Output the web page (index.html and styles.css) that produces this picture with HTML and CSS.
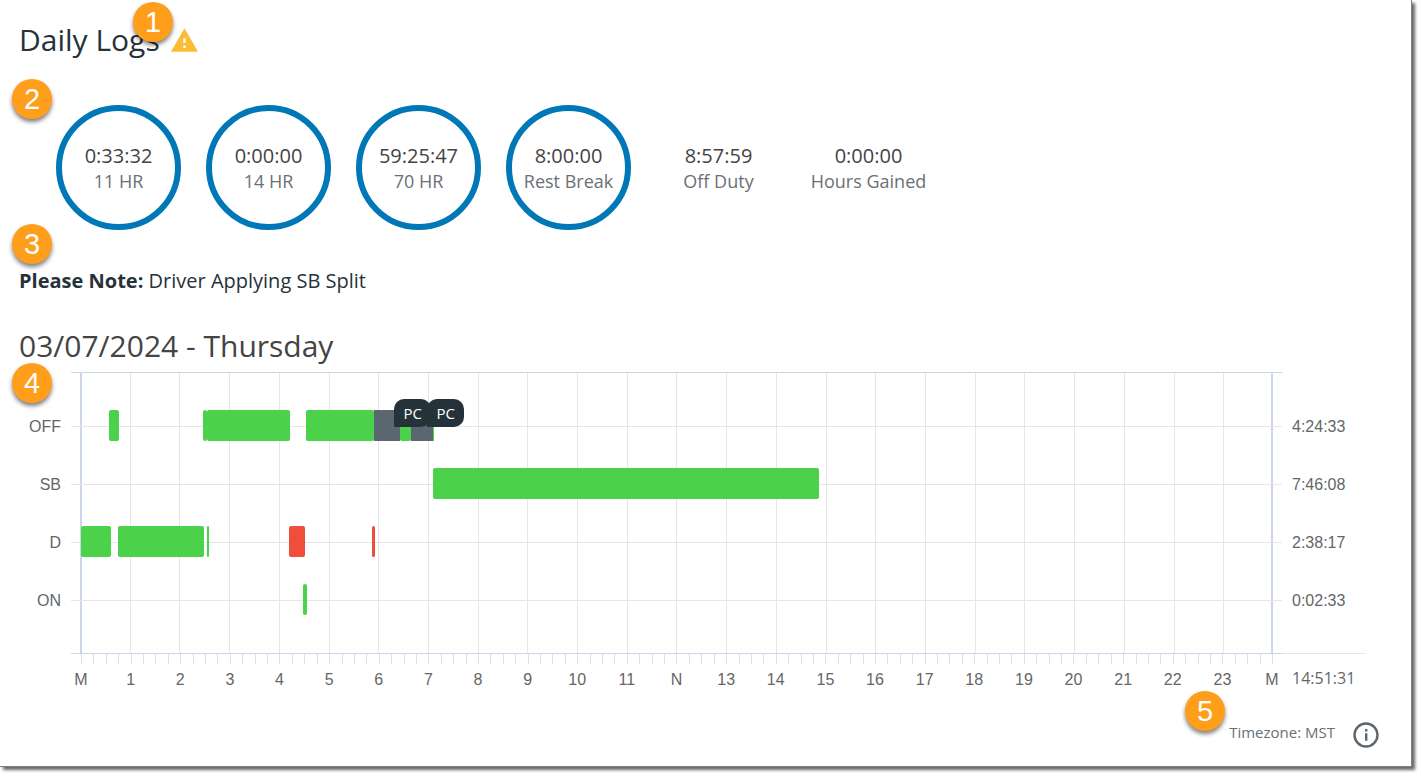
FILE: index.html
```html
<!DOCTYPE html>
<html lang="en">
<head>
  <meta charset="UTF-8" />
  <meta name="viewport" content="width=device-width, initial-scale=1.0" />
  <title>Daily Logs</title>
  <link rel="stylesheet" href="styles.css">
</head>
<body>

  <main class="card">
    <header class="card-header">
      <h1>Daily Logs</h1>
      <svg class="warning-icon" viewBox="1 2 22 19" role="img" aria-label="Warning">
        <path fill="#f9bc33" d="M1 21h22L12 2z" />
        <path fill="#fff" d="M11 10h2v4h-2zM11 16h2v2h-2z" />
      </svg>
      <span class="marker marker-title">1</span>
    </header>

    <section class="gauges">
      <span class="marker marker-gauges">2</span>
      <div class="gauge ring"><span class="time">0:33:32</span><span class="name">11 HR</span></div>
      <div class="gauge ring"><span class="time">0:00:00</span><span class="name">14 HR</span></div>
      <div class="gauge ring"><span class="time">59:25:47</span><span class="name">70 HR</span></div>
      <div class="gauge ring"><span class="time">8:00:00</span><span class="name">Rest Break</span></div>
      <div class="gauge"><span class="time">8:57:59</span><span class="name">Off Duty</span></div>
      <div class="gauge"><span class="time">0:00:00</span><span class="name">Hours Gained</span></div>
    </section>

    <p class="note"><span class="marker marker-note">3</span><strong>Please Note:</strong> Driver Applying SB Split</p>

    <h2>03/07/2024 - Thursday</h2>

    <section class="chart">
      <span class="marker marker-chart">4</span>

      <div class="lane-labels">
        <span>OFF</span>
        <span>SB</span>
        <span>D</span>
        <span>ON</span>
      </div>

      <div class="plot">
        <div class="lanes">
          <!-- OFF -->
          <div class="lane">
            <i class="bar" style="margin-left: 2.35%; width: 0.84%"></i>
            <i class="bar" style="margin-left: 7.05%; width: 0.34%"></i>
            <i class="bar" style="width: 6.97%"></i>
            <i class="bar" style="margin-left: 1.32%; width: 5.71%"></i>
            <i class="bar pc" style="width: 2.22%"><b class="flag">PC</b></i>
            <i class="bar" style="width: 0.92%"></i>
            <i class="bar pc" style="width: 1.85%"><b class="flag">PC</b></i>
            <i class="bar" style="width: 0.08%"></i>
          </div>
          <!-- SB -->
          <div class="lane">
            <i class="bar" style="margin-left: 29.53%; width: 32.43%"></i>
          </div>
          <!-- D -->
          <div class="lane">
            <i class="bar" style="width: 2.52%"></i>
            <i class="bar" style="margin-left: 0.55%; width: 7.26%"></i>
            <i class="bar" style="margin-left: 0.21%; width: 0.21%"></i>
            <i class="bar violation" style="margin-left: 6.68%; width: 1.39%"></i>
            <i class="bar violation" style="margin-left: 5.63%; width: 0.21%"></i>
          </div>
          <!-- ON -->
          <div class="lane">
            <i class="bar" style="margin-left: 18.68%; width: 0.29%"></i>
          </div>
        </div>
      </div>

      <div class="lane-totals">
        <span>4:24:33</span>
        <span>7:46:08</span>
        <span>2:38:17</span>
        <span>0:02:33</span>
      </div>

      <div class="axis">
        <div class="ticks"></div>
        <div class="hours">
          <span>M</span><span>1</span><span>2</span><span>3</span><span>4</span><span>5</span>
          <span>6</span><span>7</span><span>8</span><span>9</span><span>10</span><span>11</span>
          <span>N</span><span>13</span><span>14</span><span>15</span><span>16</span><span>17</span>
          <span>18</span><span>19</span><span>20</span><span>21</span><span>22</span><span>23</span>
          <span>M</span>
        </div>
      </div>
      <div class="grand-total">14:51:31</div>
    </section>

    <footer>
      <span class="timezone"><span class="marker marker-timezone">5</span>Timezone: MST</span>
      <button class="info" type="button" aria-label="Information">
        <svg viewBox="0 0 26 26">
          <circle cx="13" cy="13" r="11.5" fill="none" stroke="#5b6770" stroke-width="2.4" />
          <path fill="#5b6770" d="M12 7h2.4v2.4H12zM12 11.2h2.4v7.6H12z" />
        </svg>
      </button>
    </footer>
  </main>

</body>
</html>
```

FILE: styles.css
```css
* {
  box-sizing: border-box;
}
body {
  margin: 0;
  padding: 0 9px 9px 0;
  min-height: 100vh;
  background: #fff;
  color: #26323a;
  font-family: "Open Sans", sans-serif;
}
.card {
  padding: 20px 32px 18px 19px;
  border: solid #808080;
  border-width: 0 1px 1px 0;
  background: #fff;
  box-shadow: 3px 3px 3px rgba(0, 0, 0, 0.6);
}
.card-header {
  position: relative;
  display: flex;
  align-items: center;
  gap: 11px;
}
h1, h2 {
  margin: 0;
  font-size: 30px;
  font-weight: 400;
  line-height: 40px;
}
.warning-icon {
  width: 27px;
  height: 24px;
}

/* numbered callouts */
.marker {
  position: absolute;
  z-index: 2;
  width: 40px;
  height: 40px;
  border-radius: 50%;
  background: #ff9e1b;
  box-shadow: 0 3px 4px rgba(0, 0, 0, 0.5);
  color: #fff;
  font-family: "Liberation Sans", Arial, sans-serif;
  font-size: 29px;
  line-height: 40px;
  text-align: center;
}
.marker-title {
  left: 114px;
  top: -18px;
}
.marker-gauges {
  left: -44px;
  top: -26px;
}
.marker-note {
  left: -7px;
  top: -43px;
}
.marker-chart {
  left: -7px;
  top: -9px;
}
.marker-timezone {
  left: -44px;
  top: -31px;
}

.gauges {
  position: relative;
  display: flex;
  flex-wrap: wrap;
  gap: 25px;
  margin: 45px 0 0 37px;
}
.gauge {
  display: flex;
  flex-direction: column;
  align-items: center;
  justify-content: center;
  width: 125px;
  height: 125px;
  padding-top: 2px;
  line-height: 26px;
  white-space: nowrap;
}
.ring {
  border: 6px solid #0077b6;
  border-radius: 50%;
}
.time {
  color: #444;
  font-size: 20px;
}
.name {
  color: #6b7076;
  font-size: 18px;
  line-height: 25px;
}

.note {
  position: relative;
  margin: 37px 0 0;
  font-size: 20px;
  line-height: 28px;
}
h2 {
  margin-top: 31px;
  color: #444;
}

.chart {
  position: relative;
  display: grid;
  grid-template-columns: 52px 1fr 84px;
  margin: 6px 13px 0 0;
  color: #666;
  font-family: "Liberation Sans", Arial, sans-serif;
  font-size: 16px;
}
.lane-labels, .lane-totals {
  display: flex;
  flex-direction: column;
  padding: 26px 10px 23px;
  line-height: 58px;
}
.lane-labels {
  text-align: right;
}
.lane-totals {
  border-bottom: 1px solid #e6e6e6;
}
.plot {
  padding: 0 9px;
  border-top: 1px solid #ccd6eb;
  border-bottom: 1px solid #ccd6eb;
}
.lanes {
  padding: 24px 0;
  border: solid #ccd6eb;
  border-width: 0 2px;
  background: repeating-linear-gradient(to right, #e6e6e6 0 1px, transparent 1px calc(100% / 24)) border-box;
}
.lane {
  display: flex;
  align-items: center;
  height: 58px;
  margin: 0 -11px;
  padding: 0 10px;
  background: linear-gradient(#e6e6e6, #e6e6e6) center / 100% 1px no-repeat;
}
.bar {
  flex: none;
  height: 31px;
  margin-bottom: 2px;
  border-radius: 2px;
  background: #4bd14a;
}
.violation {
  background: #f04e39;
}
.pc {
  position: relative;
  border-radius: 0;
  background: #5b6770;
}
.flag {
  position: absolute;
  left: calc(100% - 6px);
  top: -11px;
  z-index: 1;
  width: 37px;
  border-radius: 10px 10px 10px 0;
  background: #26323a;
  color: #fff;
  font: 15px/28px "Open Sans", sans-serif;
  text-align: center;
}

.axis {
  grid-column: 2;
  padding: 0 10px;
}
.ticks {
  height: 10px;
  margin-right: -1px;
  background: repeating-linear-gradient(to right, #dcdfe6 0 1px, transparent 1px calc((100% - 1px) / 96));
}
.hours {
  display: flex;
  justify-content: space-between;
  margin-top: 6px;
  line-height: 20px;
}
.hours span {
  display: flex;
  justify-content: center;
  width: 0;
}
.grand-total {
  padding: 14px 0 0 10px;
  font-family: "Open Sans", sans-serif;
  line-height: 20px;
}

footer {
  display: flex;
  align-items: center;
  justify-content: flex-end;
  gap: 18px;
  margin-top: 32px;
}
.timezone {
  position: relative;
  padding-bottom: 6px;
  color: #6b7076;
  font-size: 15px;
  line-height: 20px;
}
.info {
  width: 26px;
  height: 26px;
  padding: 0;
  border: none;
  background: none;
  cursor: pointer;
}
.info svg {
  display: block;
}
```
